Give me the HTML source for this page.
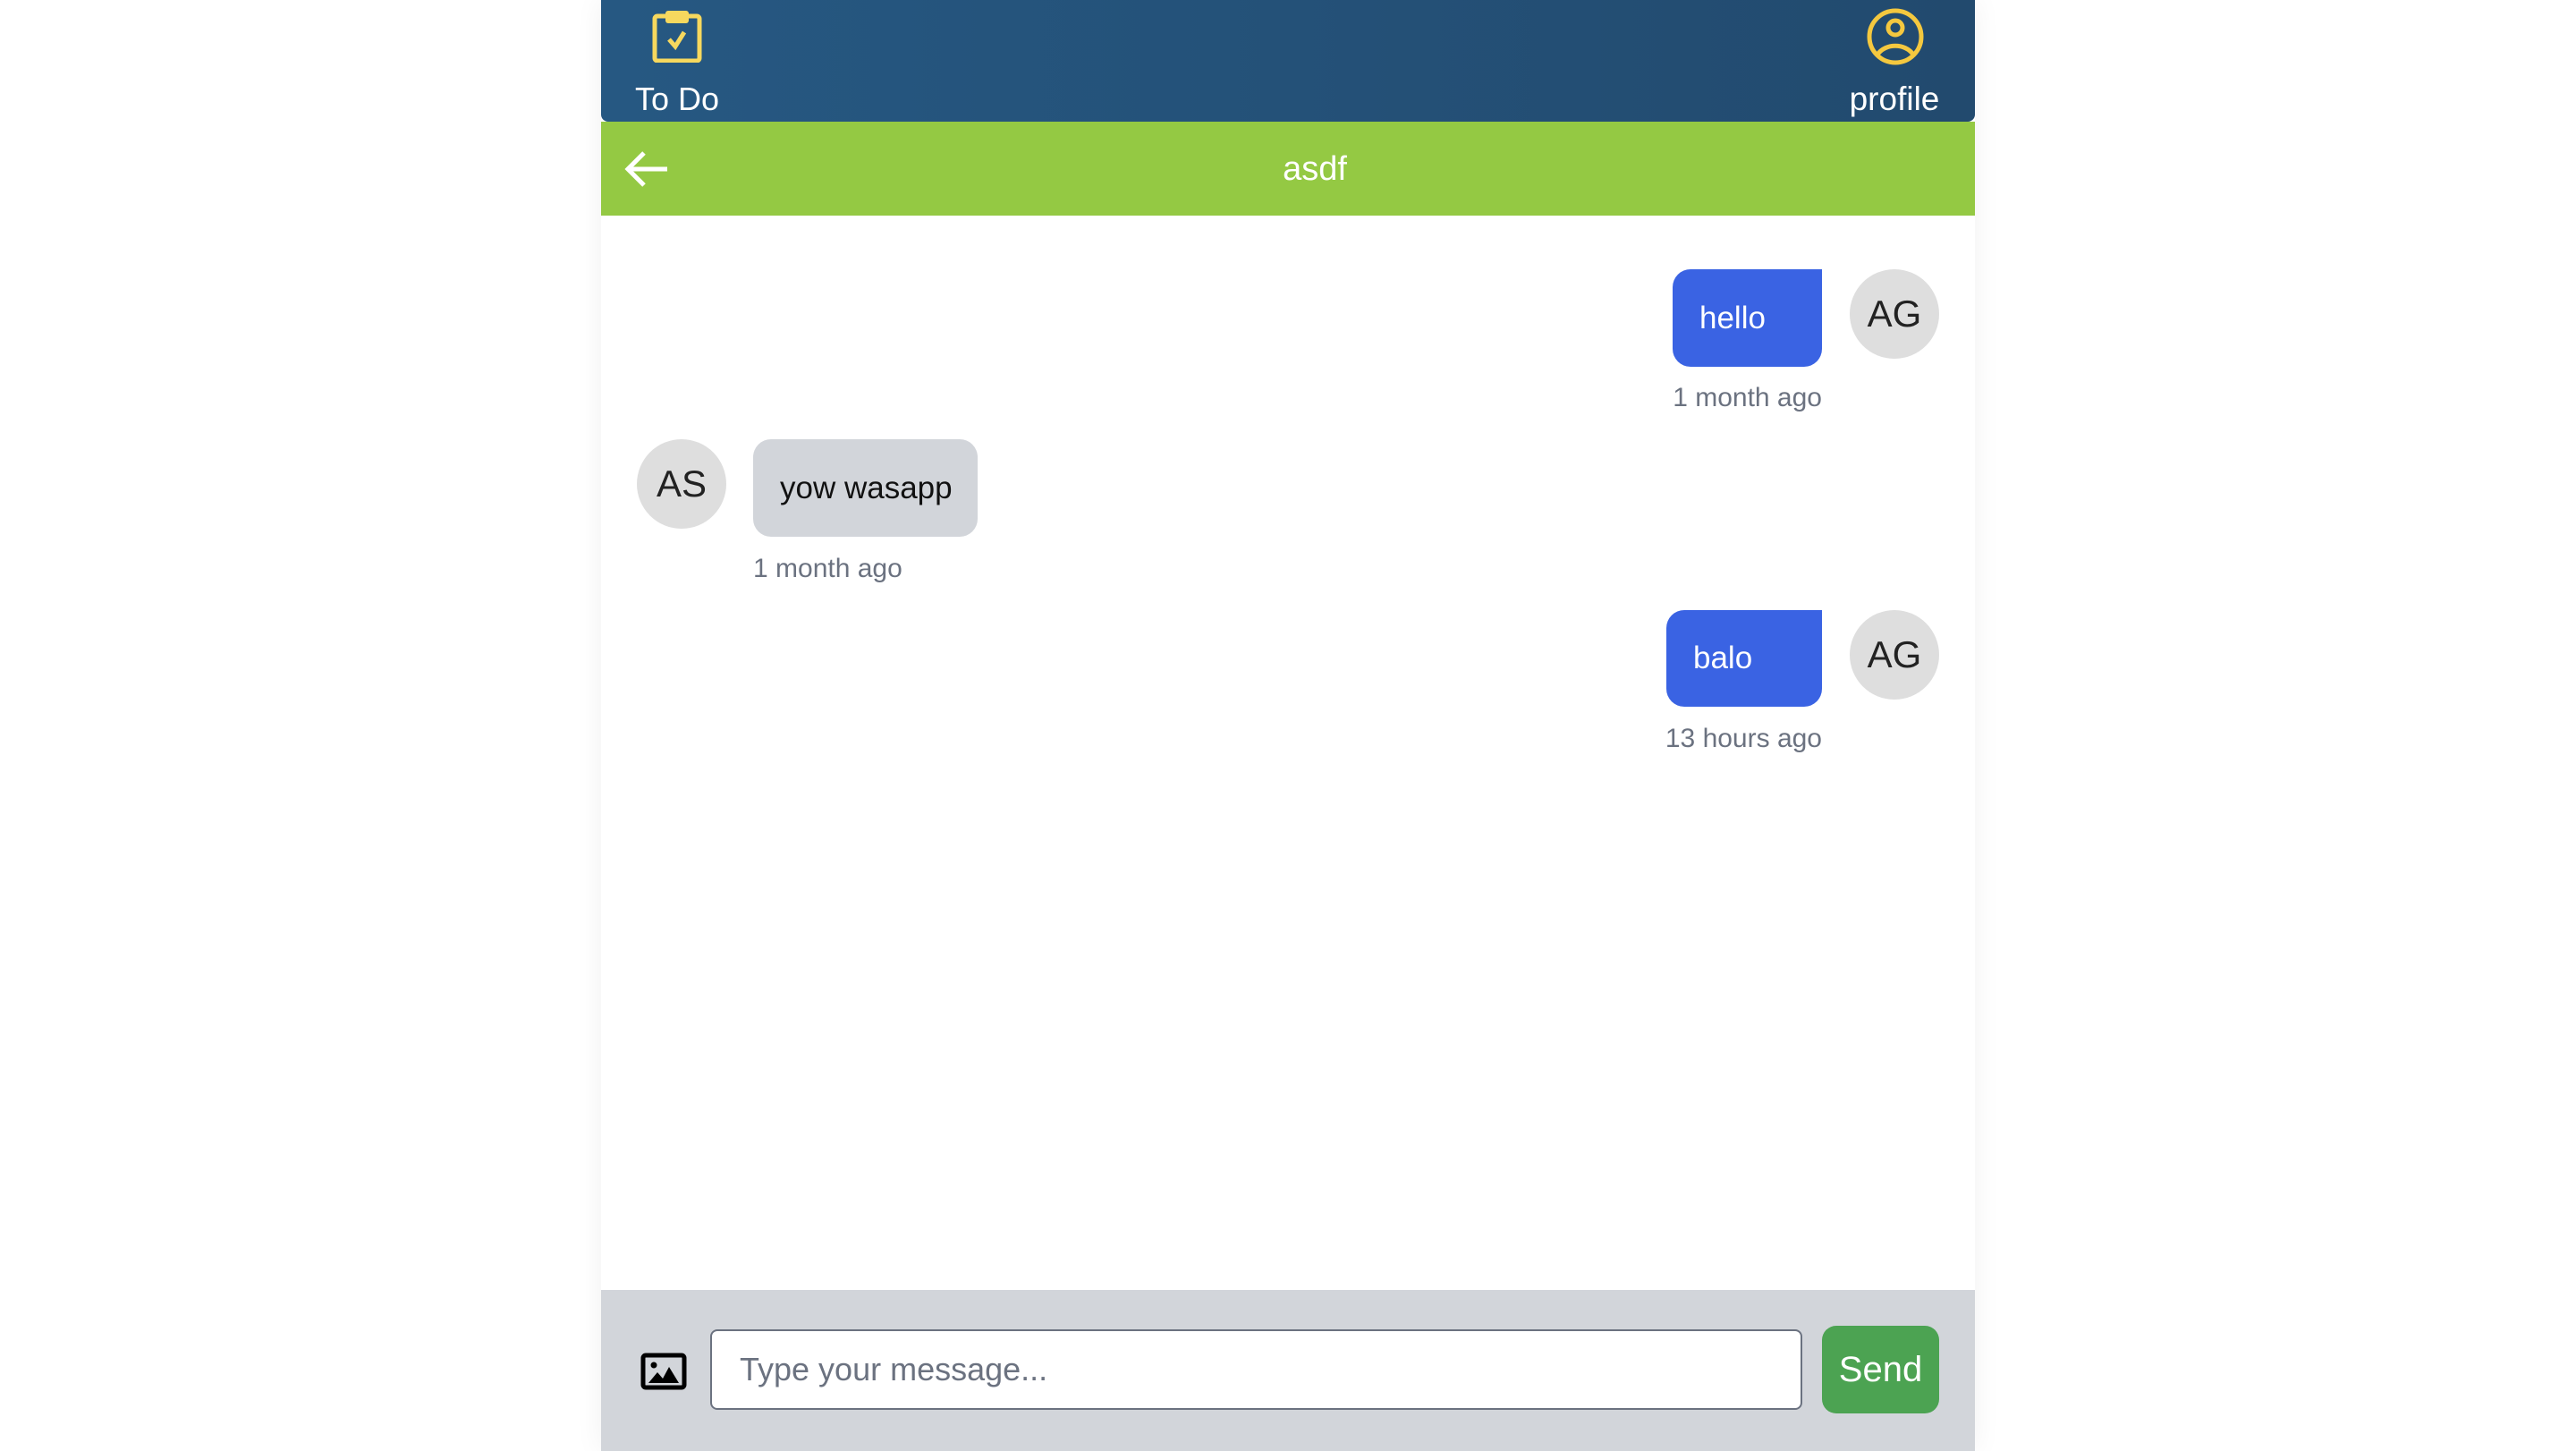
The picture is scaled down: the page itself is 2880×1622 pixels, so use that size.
<!DOCTYPE html>
<html><head><meta charset="utf-8"><style>
*{margin:0;padding:0;box-sizing:border-box}
body{width:2880px;height:1622px;background:#fff;font-family:"Liberation Sans",Arial,sans-serif;position:relative;overflow:hidden}
.c{position:absolute;left:672px;top:0;width:1536px;height:1622px;background:#fff;box-shadow:0 0 30px rgba(0,0,0,0.06)}
.hdr{position:absolute;left:0;top:0;width:1536px;height:136px;background:linear-gradient(90deg,#265882,#224a6e);border-radius:0 0 8px 8px}
.green{position:absolute;left:0;top:136px;width:1536px;height:105px;background:#94c943}
.ab{position:absolute}
.t{color:#fff;font-size:36px;position:absolute;text-align:center}
.bub{position:absolute;border-radius:20px;font-size:35px;padding-left:30px;display:flex;align-items:center}
.av{position:absolute;width:100px;height:100px;border-radius:50%;background:#dedede;color:#222;font-size:42px;display:flex;align-items:center;justify-content:center}
.tm{position:absolute;color:#6b7280;font-size:30px}
.bot{position:absolute;left:0;top:1442px;width:1536px;height:180px;background:#d2d5da}
</style></head><body>
<div class="c">
 <div class="hdr">
  <svg class="ab" style="left:56px;top:12px" width="58" height="58" viewBox="0 0 58 58"><rect x="4" y="6" width="50" height="50" rx="3" fill="none" stroke="#f6d85e" stroke-width="5"/><rect x="16" y="0" width="26" height="14" rx="3" fill="#f6d85e"/><path d="M20 32 L27 40 L37 24" fill="none" stroke="#f6d85e" stroke-width="5"/></svg>
  <div class="t" style="left:20px;top:90px;width:130px">To Do</div>
  <svg class="ab" style="left:1414px;top:8px" width="66" height="66" viewBox="0 0 66 66"><circle cx="33" cy="33" r="29" fill="none" stroke="#f4c83f" stroke-width="5"/><circle cx="33" cy="23" r="8" fill="none" stroke="#f4c83f" stroke-width="5"/><path d="M13 53 C22 40 44 40 53 53" fill="none" stroke="#f4c83f" stroke-width="5"/></svg>
  <div class="t" style="left:1386px;top:90px;width:120px;font-size:37px">profile</div>
 </div>
 <div class="green">
  <svg class="ab" style="left:26px;top:32px" width="50" height="42" viewBox="0 0 50 42"><path d="M48 21 H5 M22 3 L4 21 L22 39" fill="none" stroke="#fff" stroke-width="5"/></svg>
  <div class="t" style="left:698px;top:32px;width:200px;font-size:38px">asdf</div>
 </div>
 <div class="bub" style="left:1198px;top:301px;width:167px;height:109px;background:#3a63e3;color:#fff;border-top-right-radius:0">hello</div>
 <div class="av" style="left:1396px;top:301px">AG</div>
 <div class="tm" style="left:1150px;top:428px;width:215px;text-align:right">1 month ago</div>
 <div class="av" style="left:40px;top:491px">AS</div>
 <div class="bub" style="left:170px;top:491px;width:251px;height:109px;background:#d2d5da;color:#111">yow wasapp</div>
 <div class="tm" style="left:170px;top:619px">1 month ago</div>
 <div class="bub" style="left:1191px;top:682px;width:174px;height:108px;background:#3a63e3;color:#fff;border-top-right-radius:0">balo</div>
 <div class="av" style="left:1396px;top:682px">AG</div>
 <div class="tm" style="left:1100px;top:809px;width:265px;text-align:right">13 hours ago</div>
 <div class="bot">
  <svg class="ab" style="left:44px;top:70px" width="52" height="42" viewBox="0 0 52 42"><rect x="3" y="3" width="46" height="36" rx="3" fill="none" stroke="#000" stroke-width="5"/><circle cx="15" cy="14" r="3.5" fill="#000"/><path d="M9 34 L19 22 L25 29 L32 16 L43 34 Z" fill="#000"/></svg>
  <div class="ab" style="left:122px;top:44px;width:1221px;height:90px;background:#fff;border:2px solid #6b7280;border-radius:8px;color:#6b7280;font-size:36px;padding-left:31px;display:flex;align-items:center">Type your message...</div>
  <div class="ab" style="left:1365px;top:40px;width:131px;height:98px;background:#4ca352;border-radius:16px;color:#fff;font-size:40px;display:flex;align-items:center;justify-content:center">Send</div>
 </div>
</div>
</body></html>
